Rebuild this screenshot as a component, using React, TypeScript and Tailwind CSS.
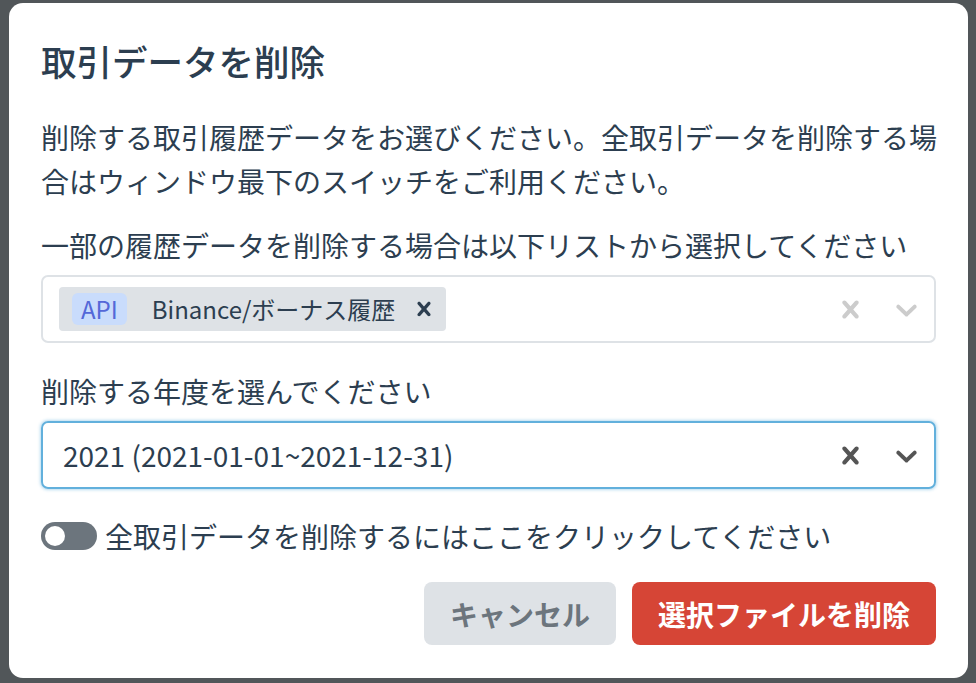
import React from "react";

const font = { fontFamily: '"Noto Sans CJK JP", "Noto Sans", sans-serif' };

function CrossIcon({ size, className }: { size: number; className?: string }) {
  return (
    <svg width={size} height={size} viewBox="0 0 20 20" className={className} fill="currentColor">
      <path d="M14.348 14.849c-0.469 0.469-1.229 0.469-1.697 0l-2.651-3.030-2.651 3.029c-0.469 0.469-1.229 0.469-1.697 0-0.469-0.469-0.469-1.229 0-1.697l2.758-3.15-2.759-3.152c-0.469-0.469-0.469-1.228 0-1.697s1.228-0.469 1.697 0l2.652 3.031 2.651-3.031c0.469-0.469 1.228-0.469 1.697 0s0.469 1.229 0 1.697l-2.758 3.152 2.758 3.15c0.469 0.469 0.469 1.229 0 1.698z" />
    </svg>
  );
}

function ChevronIcon({ size, className }: { size: number; className?: string }) {
  return (
    <svg width={size} height={size} viewBox="0 0 20 20" className={className} fill="currentColor">
      <path d="M4.516 7.548c0.436-0.446 1.043-0.481 1.576 0l3.908 3.747 3.908-3.747c0.533-0.481 1.141-0.446 1.574 0 0.436 0.445 0.408 1.197 0 1.615-0.406 0.418-4.695 4.502-4.695 4.502-0.217 0.223-0.502 0.335-0.787 0.335s-0.57-0.112-0.789-0.335c0 0-4.287-4.084-4.695-4.502s-0.436-1.17 0-1.615z" />
    </svg>
  );
}

function Indicators({ tone }: { tone: string }) {
  return (
    <div className={`ml-auto flex items-center gap-[21px] pr-[10px] ${tone}`}>
      <CrossIcon size={35} />
      <ChevronIcon size={35} />
    </div>
  );
}

export default function App() {
  return (
    <div className="min-h-screen bg-[#515659] pl-[9px] pt-[3px]" style={font}>
      <div className="flex h-[675px] w-[959px] flex-col rounded-[14px] bg-white pb-[33px] pl-8 pr-[30px] pt-[37px] text-[#2c3e50]">
        <h1 className="text-[35.5px] font-medium leading-[42px]">取引データを削除</h1>

        <p className="mt-[33px] text-[28px] leading-[44px]">
          削除する取引履歴データをお選びください。全取引データを削除する場合はウィンドウ最下のスイッチをご利用ください。
        </p>

        <label className="mt-5 text-[28px] leading-[44px]">
          一部の履歴データを削除する場合は以下リストから選択してください
        </label>
        <div className="mr-[2px] mt-2 flex h-[68px] items-center rounded-[7px] border-2 border-[#dee2e6] pl-4">
          <div className="flex h-[44px] items-center rounded-[4px] bg-[#dee2e6] pl-[13px] pr-[8px]">
            <span className="flex h-[32px] items-center rounded-[6px] bg-[#c9dcfc] px-[9px] text-[24px] text-[#5468d8]">
              API
            </span>
            <span className="ml-[25px] text-[24px]">Binance/ボーナス履歴</span>
            <CrossIcon size={28} className="ml-[15px] text-[#2c3e50]" />
          </div>
          <Indicators tone="text-[#cccccc]" />
        </div>

        <label className="mt-[26px] text-[28px] leading-[44px]">削除する年度を選んでください</label>
        <div className="mr-[2px] mt-2 flex h-[68px] items-center rounded-[7px] border-2 border-[#62b0dc] pl-5 shadow-[0_0_3px_1px_rgba(98,176,220,0.45)]">
          <span className="text-[28px]">2021 (2021-01-01~2021-12-31)</span>
          <Indicators tone="text-[#555555]" />
        </div>

        <div className="mt-[25px] flex h-[44px] items-center">
          <div className="flex h-[28px] w-[56px] items-center rounded-full bg-[#6c757d] pl-[4px]">
            <div className="h-[20px] w-[20px] rounded-full bg-white" />
          </div>
          <span className="ml-2 text-[28px]">全取引データを削除するにはここをクリックしてください</span>
        </div>

        <div className="mr-[2px] mt-auto flex justify-end gap-4">
          <button className="h-[63px] w-[192px] rounded-[8px] bg-[#dee2e6] text-[28px] font-bold text-[#6c757d]">
            キャンセル
          </button>
          <button className="h-[63px] w-[304px] rounded-[8px] bg-[#d64536] text-[28px] font-bold text-white">
            選択ファイルを削除
          </button>
        </div>
      </div>
    </div>
  );
}
